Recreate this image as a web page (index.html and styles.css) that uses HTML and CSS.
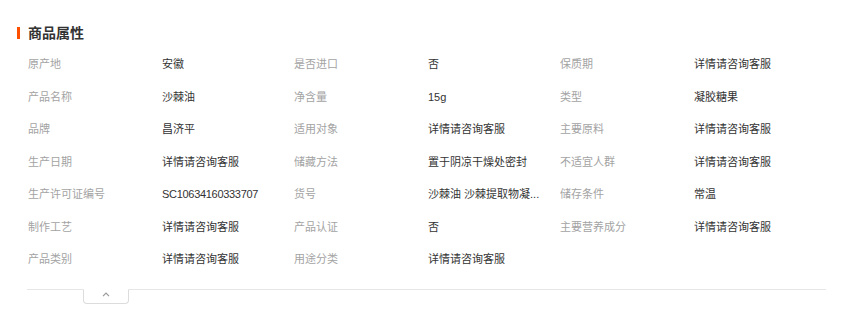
FILE: index.html
```html
<!DOCTYPE html>
<html lang="zh-CN">
<head>
<meta charset="utf-8">
<title>商品属性</title>
<link rel="stylesheet" href="styles.css">
</head>
<body>
<section class="attrs">
  <h2 class="attrs-title">商品属性</h2>
  <dl class="attrs-grid">
    <dt>原产地</dt><dd>安徽</dd>
    <dt>是否进口</dt><dd>否</dd>
    <dt>保质期</dt><dd>详情请咨询客服</dd>
    <dt>产品名称</dt><dd>沙棘油</dd>
    <dt>净含量</dt><dd>15g</dd>
    <dt>类型</dt><dd>凝胶糖果</dd>
    <dt>品牌</dt><dd>昌济平</dd>
    <dt>适用对象</dt><dd>详情请咨询客服</dd>
    <dt>主要原料</dt><dd>详情请咨询客服</dd>
    <dt>生产日期</dt><dd>详情请咨询客服</dd>
    <dt>储藏方法</dt><dd>置于阴凉干燥处密封</dd>
    <dt>不适宜人群</dt><dd>详情请咨询客服</dd>
    <dt>生产许可证编号</dt><dd class="num">SC10634160333707</dd>
    <dt>货号</dt><dd>沙棘油 沙棘提取物凝...</dd>
    <dt>储存条件</dt><dd>常温</dd>
    <dt>制作工艺</dt><dd>详情请咨询客服</dd>
    <dt>产品认证</dt><dd>否</dd>
    <dt>主要营养成分</dt><dd>详情请咨询客服</dd>
    <dt>产品类别</dt><dd>详情请咨询客服</dd>
    <dt>用途分类</dt><dd>详情请咨询客服</dd>
  </dl>
  <div class="attrs-foot">
    <div class="fold-tab" role="button" aria-label="收起">
      <svg class="fold-icon" width="8" height="5" viewBox="0 0 8 5"><path d="M1 4.2 L4 1.2 L7 4.2" fill="none" stroke="#9a9a9a" stroke-width="1.2"/></svg>
    </div>
  </div>
</section>
</body>
</html>
```

FILE: styles.css
```css
html, body {
  margin: 0;
  padding: 0;
  background: #fff;
}

body {
  font-family: "Liberation Sans", "Noto Sans CJK SC", sans-serif;
  font-size: 11px;
  color: #333;
}

.attrs {
  padding: 23px 32px 0 27px;
}

.attrs-title {
  position: relative;
  margin: 0;
  padding-left: 1px;
  font-size: 14px;
  font-weight: bold;
  line-height: 20px;
  color: #333;
}

.attrs-title::before {
  content: "";
  position: absolute;
  left: -10px;
  top: 4px;
  width: 3px;
  height: 12px;
  background: #ff5000;
}

.attrs-grid {
  display: grid;
  grid-template-columns: repeat(3, 134px 132px);
  grid-auto-rows: 32.5px;
  margin: 5px 0 0 1px;
  align-items: center;
}

.attrs-grid dt,
.attrs-grid dd {
  margin: 0;
  padding-right: 12px;
  white-space: nowrap;
  overflow: hidden;
  text-overflow: ellipsis;
  line-height: 16px;
}

.attrs-grid dt {
  color: #a3a3a3;
}

.attrs-grid dd {
  color: #333;
}

.attrs-grid .num {
  letter-spacing: -0.3px;
}

.attrs-foot {
  margin-top: 13px;
  height: 20px;
  border-top: 1px solid #e6e6e6;
  padding-left: 56px;
}

.fold-tab {
  box-sizing: border-box;
  width: 46px;
  height: 15px;
  margin-top: -1px;
  border: 1px solid #dcdcdc;
  border-top: 1px solid #fff;
  border-radius: 0 0 4px 4px;
  background: #fff;
  display: flex;
  justify-content: center;
  align-items: flex-start;
}

.fold-icon {
  display: block;
  margin-top: 2px;
}
```
